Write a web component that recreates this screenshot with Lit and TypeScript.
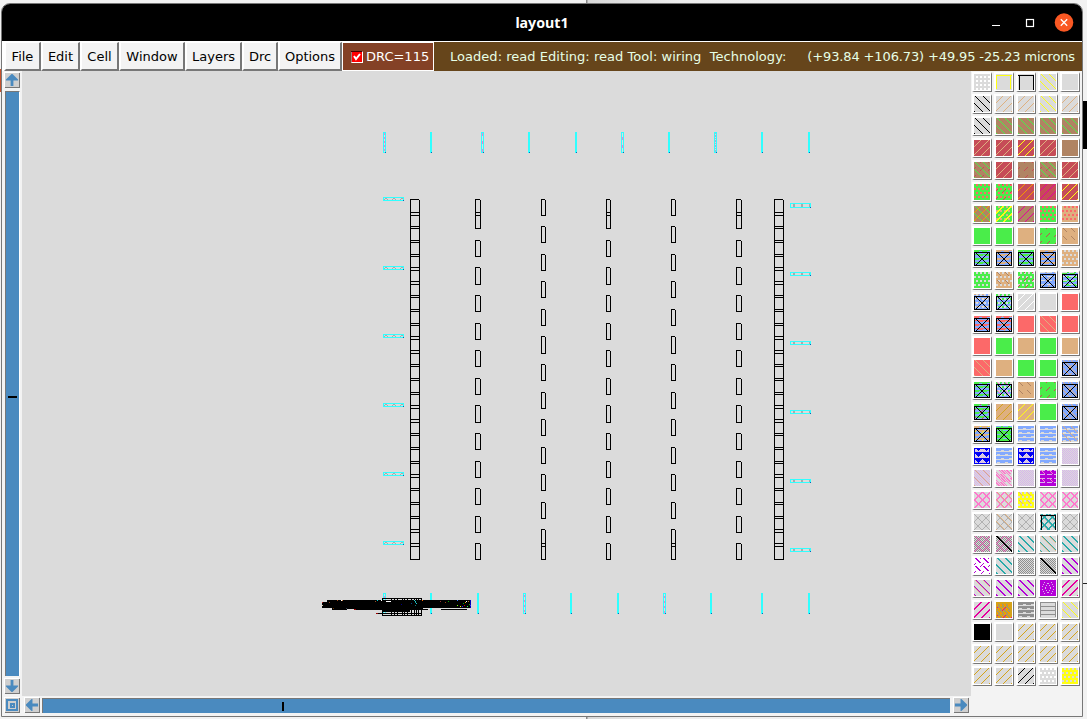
import { LitElement, html, svg, css } from "lit";
import { customElement, property } from "lit/decorators.js";

type Test = (x: number, y: number) => boolean;
const mod = (a: number, n: number) => ((a % n) + n) % n;

/* 16x16 stipple patterns, one letter each */
const STIPPLES: Record<string, Test> = {
  s: () => true,
  d: (x, y) => mod(x - y, 8) === 1,
  D: (x, y) => mod(x - y, 8) === 1 || mod(x - y, 8) === 2,
  h: (x, y) => mod(x - y, 8) === 1 && mod(y, 8) < 4,
  H: (x, y) => (mod(x - y, 8) === 1 || mod(x - y, 8) === 2) && mod(y, 8) < 5,
  u: (x, y) => (x + y) % 8 === 6,
  U: (x, y) => (x + y) % 8 === 6 || (x + y) % 8 === 7,
  v: (x, y) => (x + y) % 8 === 6 && (y + 3) % 8 < 4,
  o: (x, y) => x % 4 >= 2 && y % 4 >= 2,
  p: (x, y) => (x + (y % 8 < 4 ? 0 : 2)) % 4 >= 2 && y % 4 < 2,
  q: (x, y) => (x + (y % 8 < 4 ? 2 : 0)) % 4 >= 2 && y % 4 >= 2,
  k: (x, y) => (x + y) % 2 === 0,
  w: (x, y) => y % 4 < 2 ? true : y % 4 === 2 ? (x + (y % 8 < 4 ? 0 : 4)) % 8 < 5 : false,
  f: (x, y) => y % 4 === 0 || (y % 4 === 1 && (x + (y % 8 < 4 ? 0 : 4)) % 8 < 5),
  i: (x, y) => { const a = Math.min(x, 15 - x), b = Math.min(y, 15 - y); return (a * 3 + b * 5) % 7 === 1 && a > 0 && b > 1; },
  l: (x, y) => y % 4 === 0 || ((x === 0 || x === 15) && y < 15),
  n: (x, y) => (y < 2 || x === 0 || x >= 14) && y < 15,
  N: (x, y) => (y === 1 || x === 1 || x === 15) && y > 0,
  B: (x, y) => (y === 1 || x === 0 || x === 14) && y > 0 && y < 15,
  c: (x, y) => [0, 1].includes(mod(x - y, 8)) || [7, 0].includes((x + y) % 8),
  C: (x, y) => mod(x - y, 8) === 0 || (x + y) % 8 === 7 || ((x % 8 === 3 || x % 8 === 4) && (y % 8 === 3 || y % 8 === 4)),
  t: (x, y) => x === 0 || x === 15 || y < 1 || y === 15 || Math.abs(mod(x, 8) - 4) <= mod(9 - y, 6) - 1 || (y % 6 === 4 && x % 2 === 0),
  m: (x, y) => mod(x * 3 + y * 5, 8) < 3 !== (x % 5 === y % 4),
  b: (x, y) => y > 1 && (x === 0 || x === 15 || y === 2 || y === 15 || x === y - 1 || x + y === 16),
  g: (x, y) => y % 4 === 0 && x % 7 < 5,
  e: (x, y) => x === y || x === y + 1,
};

const COLORS: Record<string, string> = {
  _: "#dbdbdb", K: "#000000", W: "#ffffff", Y: "#ffff12", G: "#4aed4a", B: "#b08463", R: "#c64c57",
  T: "#deb080", S: "#fc6969", A: "#82a9ff", E: "#8f8f8f", L: "#b0b0b0", P: "#b400d8", C: "#29aaaa",
  I: "#ff78cd", M: "#e6009f", O: "#d4a31b", U: "#0000f5", V: "#d8b4ec", F: "#f59a00",
};

/* each entry: base colour, then stipple + colour pairs */
const ROWS = [
  "_oW _BY _NK _dY _", "_dK _uT _uT _dY _uT", "_dK BdG BdG BdG BdG", "RuT RuT RuY RuT B",
  "BdGvR RuT BvR BdGvR RuT", "GpS GpSvR RuF RuM RuY", "BdGuF GpTUY BuM GpS TpS",
  "G G T GvR ThB", "AfGbK AfTbK AfGpGbK AfTbK Tp_", "Gp_ Tp_hB Gp_vR Ag_vTbK AfGg_bK",
  "AgTp_bK AfGp_bK _uW _ S", "AfSbK AfSvTbK S SdT S", "S G T G T", "SdT T G G AvTdTbK",
  "AfGbK AfGp_hIbK ThB GvR AvTdTbK", "AfGvRbK TuO TuY G AvTdTbK", "AfTvYbK GgAbK _wA _wA _wAdT",
  "_kVtU _wA _kVtU _wA _kV", "_kVdT _mI _kV PgVhI _kV", "_cI _cIdT Yp_hT _cI _cI",
  "_CL _CLdT _CL _CLDCUCNK _CL", "_cIkE _cIkEeK _DC _DCdT _DC", "WHPvP _DC _kE _kEeK _DP",
  "_DPdT _DP _DP PiV _UM", "_UM OkEpOqFvMnO _wE _lE _dY", "K _ _uO _uO _uO", "_uO _uO _uO _uO _uO",
  "_uO _uO _uK _pW Yp_",
];

function runs(test: Test): string {
  let d = "";
  for (let y = 0; y < 16; y++) {
    for (let x = 0; x < 16; x++) {
      if (!test(x, y)) continue;
      const start = x;
      while (x < 16 && test(x, y)) x++;
      d += `M${start} ${y}h${x - start}v1h${start - x}z`;
    }
  }
  return d;
}

@customElement("layer-swatch")
class LayerSwatch extends LitElement {
  @property() spec = "_";
  static styles = css`
    :host { display: block; box-sizing: border-box; width: 20px; height: 20px; border: 2px solid #fff;
      border-right-color: #777; border-bottom-color: #777; border-right-width: 1px; border-bottom-width: 1px;
      padding: 0 1px 1px 0; background: #fff; }
    svg { display: block; }
  `;
  render() {
    const layers = [];
    for (let i = 1; i < this.spec.length; i += 2) {
      layers.push(svg`<path d=${runs(STIPPLES[this.spec[i]])} fill=${COLORS[this.spec[i + 1]]}></path>`);
    }
    return html`<svg width="16" height="16" shape-rendering="crispEdges">
      <rect width="16" height="16" fill=${COLORS[this.spec[0]]}></rect>${layers}</svg>`;
  }
}

@customElement("layout-canvas")
class LayoutCanvas extends LitElement {
  static styles = css`
    :host { display: block; background: #dbdbdb; }
    svg { display: block; }
  `;
  private box(x: number, w: number, j: number) {
    const t = Math.round(198.5 + 13.79 * j + 0.01);
    const b = Math.floor(215.2 + 13.79 * j);
    return `M${x} ${t}h${w - 1}v1h${2 - w}v${b - t - 1}h${w - 2}v${t - b + 1}h1v${b - t}h${-w}z`;
  }
  private cells() {
    const all = Array.from({ length: 26 }, (_, j) => j);
    const odd = all.filter((j) => j === 0 || j % 2 === 1);
    const even = all.filter((j) => j === 25 || j % 2 === 0);
    const cols: [number, number, number[]][] = [
      [410, 10, all], [475, 6, odd], [541, 5, even], [606, 5, odd], [671, 5, even], [736, 6, odd], [774, 10, all],
    ];
    return cols.map(([x, w, js]) => svg`<path d=${js.map((j) => this.box(x, w, j)).join("")}></path>`);
  }
  private vertical(x: number, y: number, dash: string) {
    return svg`<rect x=${x} y=${y} width=${dash ? 3 : 2} height="21" fill="#30ffff"></rect>
      ${dash ? svg`<rect x=${x + 1} y=${y + 1} width="1" height="19" fill="#dbdbdb"></rect>
        <path d=${`M${x + 1.5} ${y + 1}v19`} stroke=${dash.startsWith("c") ? "#bba6c6" : "#ff78cd"} stroke-dasharray=${dash.slice(1)}></path>` : ""}
      <rect x=${x + (dash ? 2 : 1)} y=${y + 20} width="1" height="1" fill="#0a64b4"></rect>`;
  }
  private horizontal(x: number, y: number, h: number, kind: number) {
    const d = kind ? `M${x + 3} ${y + 1}h2v${h - 2}h-2zM${x + 11} ${y + 1}h2v${h - 2}h-2zM${x + 19} ${y + 1}h1v${h - 2}h-1z`
      : `M${x + 1} ${y + 2}h1v1h-1zM${x + 2} ${y + 1}h2v1h-2zM${x + 4} ${y + 2}h1v1h-1zM${x + 9} ${y + 2}h1v1h-1zM${x + 10} ${y + 1}h2v1h-2zM${x + 12} ${y + 2}h1v1h-1zM${x + 17} ${y + 2}h1v1h-1zM${x + 18} ${y + 1}h2v1h-2z`;
    return svg`<rect x=${x} y=${y} width="21" height=${h} fill="#30ffff"></rect>
      <rect x=${x + 1} y=${y + 1} width="19" height=${h - 2} fill="#dbdbdb"></rect>
      <path d=${d} fill="#aaa"></path><rect x=${x + 20} y=${y + h - 1} width="1" height="1" fill="#0a64b4"></rect>`;
  }
  render() {
    const top: [number, string][] = [[383, "p2 2"], [430, ""], [481, "p3 5"], [528, ""], [575, ""], [621, "p0 4 3 5 3 5"], [668, ""], [714, "c1 1 2 1"], [761, ""], [808, ""]];
    const bottom: [number, string][] = [[383, "p0 2 2 2"], [430, ""], [477, ""], [523, "p0 1 2 2"], [570, ""], [617, ""], [663, "p0 2 2 1"], [710, ""], [761, ""], [808, ""]];
    const specks: [number, number, string][] = [
      [322, 602, "#b01818"], [322, 605, "#dca"], [329, 602, "#8a4a20"], [337, 600, "#964b20"], [341, 600, "#fff"],
      [342, 600, "#d08040"], [375, 601, "#964b20"], [377, 600, "#0cc"], [381, 600, "#fff"], [414, 600, "#2cc"],
      [415, 601, "#2cc"], [415, 602, "#18a0a0"], [416, 603, "#2cc"], [415, 605, "#177"], [422, 600, "#f60"],
      [440, 601, "#933"], [445, 602, "#941"], [448, 601, "#0a0"], [457, 600, "#37f"], [463, 603, "#0a0"],
      [457, 605, "#7f0"], [460, 606, "#ff0"], [462, 606, "#22f"], [465, 602, "#eb0"], [466, 601, "#fff"],
      [464, 605, "#b00"], [468, 601, "#b72"], [467, 606, "#2f3"], [469, 604, "#0a0"], [470, 605, "#33f"],
      [401, 604, "#008"], [411, 603, "#048"], [333, 608, "#630"], [346, 608, "#345"],
    ];
    return html`<svg width="949" height="625" viewBox="22 71 949 625" shape-rendering="crispEdges">
      ${this.cells()}
      ${top.map(([x, d]) => this.vertical(x, 132, d))}
      ${bottom.map(([x, d]) => this.vertical(x, 593, d))}
      ${[197, 266, 334, 403, 472, 541].map((y) => this.horizontal(383, y, 4, 0))}
      ${[203, 272, 341, 410, 479, 548].map((y, i) => this.horizontal(790, y, i ? 4 : 5, 1))}
      <path d="M322 602h5v-2h144v8h-48v1h-90v-1h-11zM332 608h15v2h-15zM354 609h74v1h-74zM441 609h26v1h-26zM376 613h46v1h-46z"></path>
      <path d="M382 598h40v18h-40zm1 1v16h38v-16z" fill-rule="evenodd"></path>
      <path d="M391 599v17M394.5 599v17M397 599v17M402 599v17M404.500 599v17M407.500 599v17M411 599v17M414 599v17M416.500 599v17M418.500 599v17" stroke="#000"></path>
      <path d="M382 602h28v10h-28z"></path>
      <path d="M386 601h5v1h-5z" fill="#fff"></path>
      <path d="M470 600h1v8h-1z" fill="#0000b8"></path>
      <path d="M354 609h2v1h-2zM376 613h2v1h-2z" fill="#900"></path>
      ${specks.map(([x, y, c]) => svg`<rect x=${x} y=${y} width="1" height="1" fill=${c}></rect>`)}
    </svg>`;
  }
}

const ARROW = "M8 1l6 6v1h-5v6h-3v-6h-5v-1l6-6z";

@customElement("app-root")
class AppRoot extends LitElement {
  static styles = css`
    :host { display: block; width: 1087px; height: 719px; overflow: hidden; box-sizing: border-box;
      padding: 3px 3px 2px 1px;
      background: linear-gradient(#000, #000) 1083px 101px / 4px 48px no-repeat,
        linear-gradient(#222, #222) 1083px 583px / 4px 1px no-repeat,
        linear-gradient(#c8502a, #c8502a) 0 69px / 2px 23px no-repeat,
        linear-gradient(90deg, #f2f2f2 586px, #888 586px 587px, #d8d8d8 588px, #eee 680px, #f2f2f2);
      font: 13px "DejaVu Sans", sans-serif; }
    .window { display: flex; flex-direction: column; box-sizing: border-box; width: 1082px; height: 714px; border: 1px solid #777;
      border-radius: 9px 9px 0 0; overflow: hidden; background: #f3f3f3; }
    .title { display: grid; grid-template-columns: 1fr auto 1fr; align-items: center; height: 37px; flex: none; background: #000; color: #fff; }
    .name { font: bold 14.2px "Noto Sans", sans-serif; }
    .controls { display: flex; justify-content: flex-end; padding-right: 8px; }
    svg { display: block; }
    .menu { display: flex; height: 30px; flex: none; box-sizing: border-box; padding: 1px 0 0 2px; background: #fff; white-space: pre; }
    .item { box-sizing: border-box; flex: none; height: 29px; border: solid #777; border-width: 0 2px 2px 0; border-left: 2px solid #fff;
      border-top: 1px solid #fff; background: #f3f3f3; display: flex; align-items: center; justify-content: center; color: #000; }
    .drc { display: flex; flex: none; align-items: center; gap: 3px; box-sizing: border-box; width: 92px; height: 28px; margin-top: 1px; padding-left: 8px;
      border-bottom: 1px solid #fff; border-right: 1px solid #fff; border-left: 1px solid #fff; background: #844126; color: #fff; }
    .status { display: flex; align-items: center; flex: 1; padding: 0 7px 1px 16px; justify-content: space-between; background: #66451b; color: #e6ffe6; }
    .message { letter-spacing: 0.035px; }
    .coords { letter-spacing: -0.13px; }
    .body { display: grid; grid-template: 625px 21px / 20px 949px 1fr; flex: 1; }
    .vbar { display: flex; flex-direction: column; align-items: flex-start; padding: 2px 0 0 3px; background: #f3f3f3; }
    .hbar { display: flex; padding: 2px 0 0 3px; border-top: 0; background: #f3f3f3; }
    .corner { padding: 2px 0 0 3px; }
    .btn { width: 14px; height: 14px; border-right: 1px solid #777; border-bottom: 1px solid #777; box-shadow: -1px -1px #fff; background: #cfcfcf; }
    .vtrack { box-sizing: border-box; width: 15px; height: 585px; margin: 3px 0 3px; padding: 304px 0 0 2px; border: solid #777; border-width: 1px 1px 0 1px;
      border-right-color: #fff; background: #4a8abf; }
    .htrack { box-sizing: border-box; width: 908px; height: 15px; margin: 0 4px 0 2px; padding: 3px 0 0 239px; border: solid #777; border-width: 1px 0 0 1px;
      background: #4a8abf; }
    .vtick { width: 9px; height: 2px; background: #000; }
    .htick { width: 2px; height: 9px; background: #000; }
    .palette { grid-column: 3; grid-row: 1 / 3; display: grid; grid-template-columns: repeat(5, 20px); grid-auto-rows: 20px; gap: 2px; align-content: start;
      padding: 1px 0 0 1px; background: #f3f3f3; }
  `;
  private menus: [string, number][] = [["File", 37], ["Edit", 39], ["Cell", 39], ["Window", 66], ["Layers", 57], ["Drc", 36], ["Options", 64]];
  private arrow(turn: number) {
    return html`<div class="btn"><svg width="14" height="14" viewBox="0 0 15 15"><path d=${ARROW} fill="#4a8abf" transform=${`rotate(${turn} 7.5 7.5)`}></path></svg></div>`;
  }
  render() {
    return html`<div class="window">
      <div class="title"><span></span><span class="name">layout1</span>
        <div class="controls"><svg width="84" height="20">
          <path d="M2 12.500h8" stroke="#fff"></path><rect x="36.500" y="6.500" width="7" height="7" fill="none" stroke="#fff" stroke-width="1.200"></rect>
          <circle cx="74" cy="9.500" r="9.300" fill="#fa5823"></circle><path d="M70.800 6.300l6.400 6.400m0-6.400l-6.400 6.400" stroke="#fff" stroke-width="1.300"></path></svg></div>
      </div>
      <div class="menu">
        ${this.menus.map(([m, w]) => html`<div class="item" style=${`width:${w}px`}>${m}</div>`)}
        <div class="drc"><svg width="12" height="12"><rect x=".5" y=".5" width="11" height="11" fill="#f00" stroke="#fff"></rect><path d="M0 11.500V.5h11.500" fill="none" stroke="#400"></path><path d="M3 5l2 3 4-5" fill="none" stroke="#fff" stroke-width="2"></path></svg><span>DRC=115</span></div>
        <div class="status"><span class="message">Loaded: read Editing: read Tool: wiring  Technology:</span><span class="coords">(+93.84 +106.73) +49.95 -25.23 microns</span></div>
      </div>
      <div class="body">
        <div class="vbar">${this.arrow(0)}<div class="vtrack"><div class="vtick"></div></div>${this.arrow(180)}</div>
        <layout-canvas></layout-canvas>
        <div class="palette">${ROWS.flatMap((r) => r.split(" ")).map((s) => html`<layer-swatch .spec=${s}></layer-swatch>`)}</div>
        <div class="corner"><div class="btn"><svg width="14" height="14" shape-rendering="crispEdges"><path d="M1 1h12v12h-12zm2 2v8h8v-8zM4.500 4.500h5v5h-5zm2 2v1h1v-1z" fill="#4a8abf" fill-rule="evenodd"></path></svg></div></div>
        <div class="hbar">${this.arrow(-90)}<div class="htrack"><div class="htick"></div></div>${this.arrow(90)}</div>
      </div>
    </div>`;
  }
}
